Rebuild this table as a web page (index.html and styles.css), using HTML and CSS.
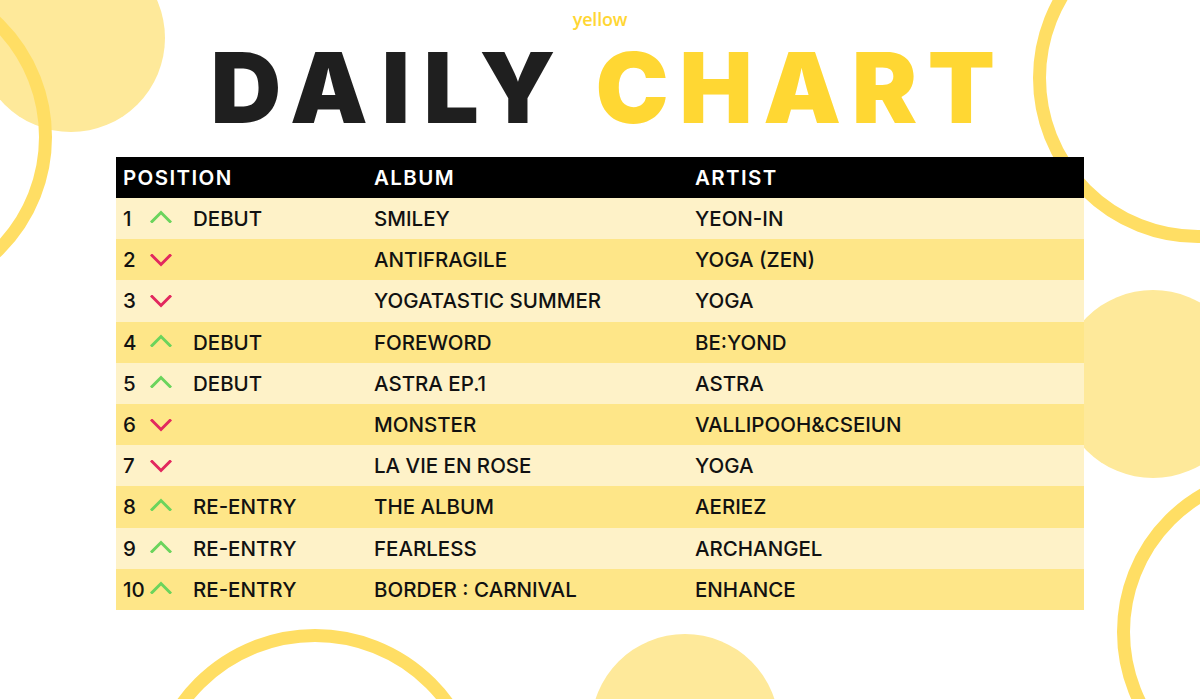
FILE: index.html
```html
<!DOCTYPE html>
<html lang="en">
<head>
<meta charset="utf-8">
<title>Daily Chart</title>
<link rel="stylesheet" href="styles.css">
</head>
<body>
<div class="bg">
  <div class="disc disc-tl"></div>
  <div class="disc disc-r"></div>
  <div class="disc disc-b"></div>
  <div class="ring ring-tl"></div>
  <div class="ring ring-tr"></div>
  <div class="ring ring-br"></div>
  <div class="ring ring-b"></div>
</div>
<main class="page">
  <div class="brand">yellow</div>
  <h1 class="title"><span class="dark">DAILY</span> <span class="gold">CHART</span></h1>
  <div class="chart">
    <div class="row head">
      <div class="cell pos">POSITION</div>
      <div class="cell">ALBUM</div>
      <div class="cell">ARTIST</div>
    </div>
    <div class="row light">
      <div class="cell pos"><span class="num">1</span><svg class="arr up" viewBox="0 0 22 13"><polyline points="2,11.5 11,2.5 20,11.5"/></svg><span class="status">DEBUT</span></div>
      <div class="cell">SMILEY</div>
      <div class="cell">YEON-IN</div>
    </div>
    <div class="row dark">
      <div class="cell pos"><span class="num">2</span><svg class="arr down" viewBox="0 0 22 13"><polyline points="2,1.5 11,10.5 20,1.5"/></svg><span class="status"></span></div>
      <div class="cell">ANTIFRAGILE</div>
      <div class="cell">YOGA (ZEN)</div>
    </div>
    <div class="row light">
      <div class="cell pos"><span class="num">3</span><svg class="arr down" viewBox="0 0 22 13"><polyline points="2,1.5 11,10.5 20,1.5"/></svg><span class="status"></span></div>
      <div class="cell">YOGATASTIC SUMMER</div>
      <div class="cell">YOGA</div>
    </div>
    <div class="row dark">
      <div class="cell pos"><span class="num">4</span><svg class="arr up" viewBox="0 0 22 13"><polyline points="2,11.5 11,2.5 20,11.5"/></svg><span class="status">DEBUT</span></div>
      <div class="cell">FOREWORD</div>
      <div class="cell">BE:YOND</div>
    </div>
    <div class="row light">
      <div class="cell pos"><span class="num">5</span><svg class="arr up" viewBox="0 0 22 13"><polyline points="2,11.5 11,2.5 20,11.5"/></svg><span class="status">DEBUT</span></div>
      <div class="cell">ASTRA EP.1</div>
      <div class="cell">ASTRA</div>
    </div>
    <div class="row dark">
      <div class="cell pos"><span class="num">6</span><svg class="arr down" viewBox="0 0 22 13"><polyline points="2,1.5 11,10.5 20,1.5"/></svg><span class="status"></span></div>
      <div class="cell">MONSTER</div>
      <div class="cell">VALLIPOOH&amp;CSEIUN</div>
    </div>
    <div class="row light">
      <div class="cell pos"><span class="num">7</span><svg class="arr down" viewBox="0 0 22 13"><polyline points="2,1.5 11,10.5 20,1.5"/></svg><span class="status"></span></div>
      <div class="cell">LA VIE EN ROSE</div>
      <div class="cell">YOGA</div>
    </div>
    <div class="row dark">
      <div class="cell pos"><span class="num">8</span><svg class="arr up" viewBox="0 0 22 13"><polyline points="2,11.5 11,2.5 20,11.5"/></svg><span class="status">RE-ENTRY</span></div>
      <div class="cell">THE ALBUM</div>
      <div class="cell">AERIEZ</div>
    </div>
    <div class="row light">
      <div class="cell pos"><span class="num">9</span><svg class="arr up" viewBox="0 0 22 13"><polyline points="2,11.5 11,2.5 20,11.5"/></svg><span class="status">RE-ENTRY</span></div>
      <div class="cell">FEARLESS</div>
      <div class="cell">ARCHANGEL</div>
    </div>
    <div class="row dark">
      <div class="cell pos"><span class="num">10</span><svg class="arr up" viewBox="0 0 22 13"><polyline points="2,11.5 11,2.5 20,11.5"/></svg><span class="status">RE-ENTRY</span></div>
      <div class="cell">BORDER : CARNIVAL</div>
      <div class="cell">ENHANCE</div>
    </div>
  </div>
</main>
</body>
</html>
```

FILE: styles.css
```css
* { box-sizing: border-box; }
html, body {
  margin: 0;
  padding: 0;
  width: 1200px;
  height: 699px;
  overflow: hidden;
  background: #ffffff;
}
body {
  position: relative;
  font-family: "Inter", "Liberation Sans", sans-serif;
  color: #111111;
}

/* decorative background shapes */
.bg {
  position: absolute;
  inset: 0;
  z-index: 0;
  overflow: hidden;
}
.disc {
  position: absolute;
  width: 188px;
  height: 188px;
  border-radius: 50%;
  background: #fee99a;
}
.disc-tl { left: -23px; top: -56px; }
.disc-r { left: 1059px; top: 290px; }
.disc-b { left: 591px; top: 634px; }

.ring {
  position: absolute;
  width: 330px;
  height: 330px;
  border-radius: 50%;
  border: 13px solid #ffde64;
}
.ring-tl { left: -278px; top: -28px; }
.ring-tr { left: 1033px; top: -87px; }
.ring-br { left: 1117px; top: 467px; }
.ring-b { left: 145px; top: 629px; width: 340px; height: 340px; }

/* content */
.page {
  position: relative;
  z-index: 1;
  display: flex;
  flex-direction: column;
  align-items: center;
}
.brand {
  padding-top: 9px;
  height: 29px;
  font-family: "Open Sans", "Liberation Sans", sans-serif;
  font-weight: 600;
  font-size: 18px;
  line-height: 20px;
  color: #ffd633;
  letter-spacing: -0.2px;
}
.title {
  margin: 10px 0 0 0;
  height: 98px;
  font-family: "Inter", "Liberation Sans", sans-serif;
  font-weight: 900;
  font-size: 98px;
  line-height: 98px;
  letter-spacing: 12px;
  word-spacing: -5px;
  white-space: nowrap;
  padding-left: 16px;
}
.title .dark { color: #1f1f1f; letter-spacing: 13.5px; }
.title .gold { color: #ffd733; letter-spacing: 10.5px; }

.chart {
  margin-top: 20px;
  width: 968px;
  display: flex;
  flex-direction: column;
}
.row {
  display: grid;
  grid-template-columns: 258px 321px 1fr;
  height: 41.2px;
  align-items: center;
  font-size: 20.5px;
  font-weight: 500;
  letter-spacing: 0;
}
.row.head {
  height: 41px;
  background: #000000;
  color: #ffffff;
  font-weight: 600;
  letter-spacing: 1.4px;
}
.row.light { background: #fef2c8; }
.row.dark { background: #fee688; }
.cell {
  white-space: nowrap;
  display: flex;
  align-items: center;
}
.cell.pos { padding-left: 7px; }
.num { width: 27px; }
.arr {
  width: 22px;
  height: 13px;
  fill: none;
  stroke-width: 3;
  stroke-linecap: square;
  stroke-linejoin: miter;
}
.arr.up { stroke: #6bd45c; margin-top: -4px; }
.arr.down { stroke: #e2285e; margin-top: 2px; }
.status { margin-left: 21px; }
```
